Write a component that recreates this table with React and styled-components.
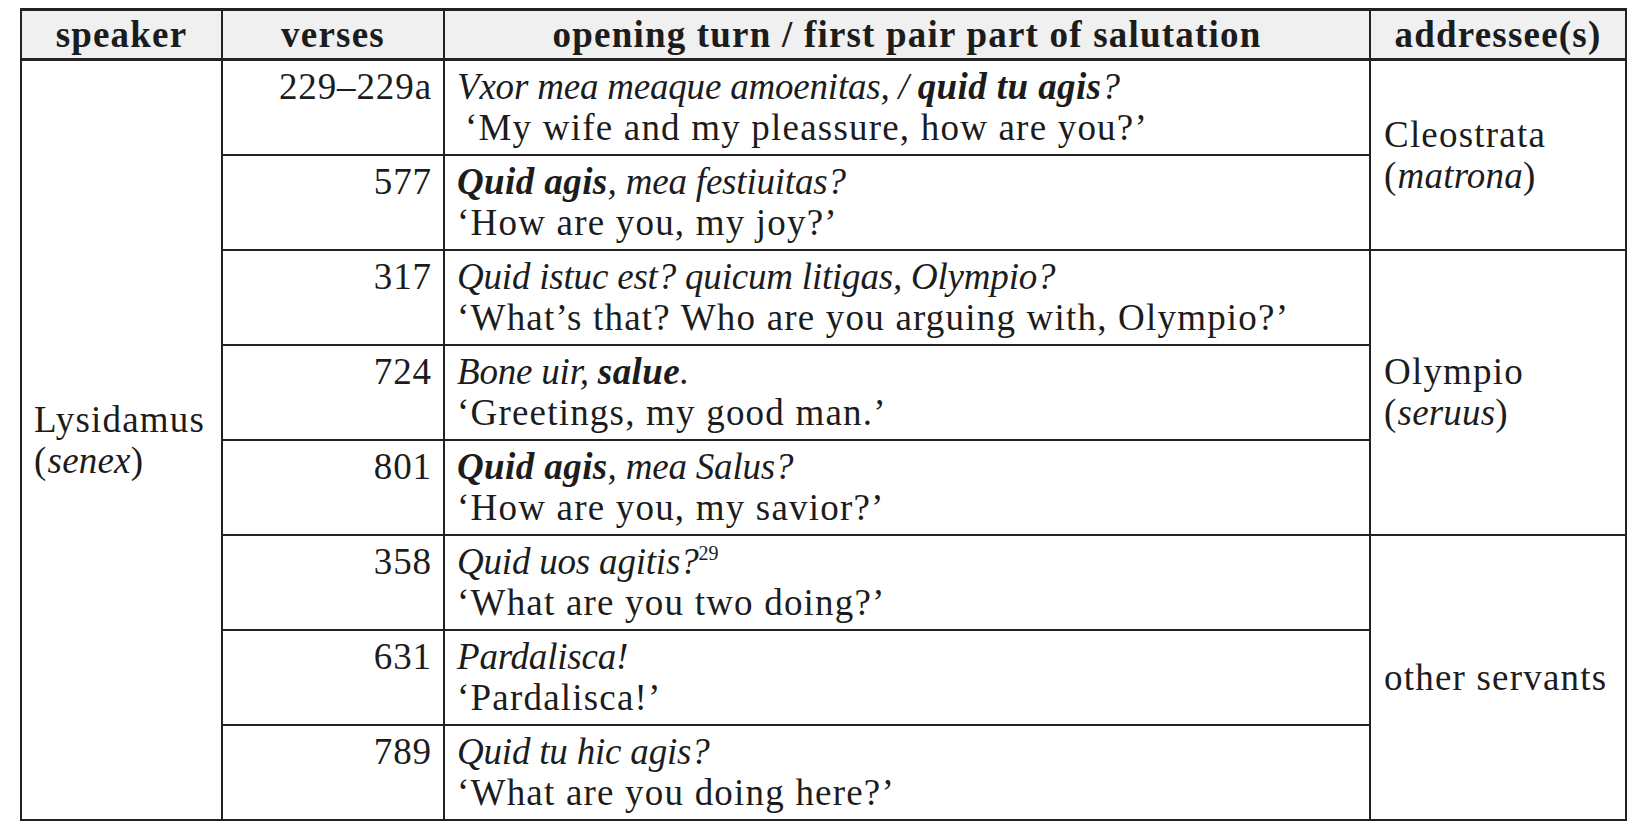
import React from "react";
import styled, { createGlobalStyle } from "styled-components";

const GlobalStyle = createGlobalStyle`
  body {
    margin: 0;
    background: #ffffff;
  }
`;

const Page = styled.div`
  padding: 8px 0 0 20px;
`;

const Table = styled.table`
  border-collapse: collapse;
  table-layout: fixed;
  width: 1605px;
  font-family: "Liberation Serif", "Times New Roman", serif;
  font-size: 37px;
  letter-spacing: 1.2px;
  color: #1c1c1c;
`;

const HeadRow = styled.tr`
  height: 50px;
`;

const HeadCell = styled.th`
  background: #f0f0f0;
  border: 2px solid #222;
  border-top-width: 3px;
  border-bottom-width: 3px;
  font-weight: bold;
  font-size: 37px;
  letter-spacing: 1.2px;
  text-align: center;
  padding: 0 6px;
  line-height: 40px;
  white-space: nowrap;
`;

const Row = styled.tr`
  height: 95px;
`;

const Cell = styled.td`
  border: 2px solid #222;
  line-height: 41px;
  vertical-align: top;
  padding: 5px 12px 5px 12px;
`;

const SpeakerCell = styled(Cell)`
  vertical-align: middle;
`;

const VerseCell = styled(Cell)`
  text-align: right;
  padding-right: 11px;
  letter-spacing: 0.9px;
`;

const TurnCell = styled(Cell)`
  padding-left: 12px;
  white-space: nowrap;
`;

const AddresseeCell = styled(Cell)`
  vertical-align: middle;
  padding-left: 13px;
`;

const Latin = styled.div`
  font-style: italic;
  letter-spacing: -0.2px;
`;

const Strong = styled.b`
  font-weight: bold;
  letter-spacing: 0.4px;
`;

const English = styled.div`
  padding-left: ${(p) => (p.indent ? "8px" : "0")};
`;

const Note = styled.sup`
  font-style: normal;
  font-size: 20px;
  line-height: 0;
  vertical-align: 14px;
  letter-spacing: 0;
`;

const Em = styled.i`
  font-style: italic;
  letter-spacing: 0.2px;
`;

const Line = styled.div``;

const rows = [
  {
    verse: "229–229a",
    latin: (
      <>
        Vxor mea meaque amoenitas, / <Strong>quid tu agis</Strong>?
      </>
    ),
    english: "‘My wife and my pleassure, how are you?’",
    indent: true,
  },
  {
    verse: "577",
    latin: (
      <>
        <Strong>Quid agis</Strong>, mea festiuitas?
      </>
    ),
    english: "‘How are you, my joy?’",
  },
  {
    verse: "317",
    latin: <>Quid istuc est? quicum litigas, Olympio?</>,
    english: "‘What’s that? Who are you arguing with, Olympio?’",
  },
  {
    verse: "724",
    latin: (
      <>
        Bone uir, <Strong>salue</Strong>.
      </>
    ),
    english: "‘Greetings, my good man.’",
  },
  {
    verse: "801",
    latin: (
      <>
        <Strong>Quid agis</Strong>, mea Salus?
      </>
    ),
    english: "‘How are you, my savior?’",
  },
  {
    verse: "358",
    latin: (
      <>
        Quid uos agitis?<Note>29</Note>
      </>
    ),
    english: "‘What are you two doing?’",
  },
  {
    verse: "631",
    latin: <>Pardalisca!</>,
    english: "‘Pardalisca!’",
  },
  {
    verse: "789",
    latin: <>Quid tu hic agis?</>,
    english: "‘What are you doing here?’",
  },
];

const addressees = {
  0: { span: 2, name: "Cleostrata", role: "matrona" },
  2: { span: 3, name: "Olympio", role: "seruus" },
  5: { span: 3, name: "other servants" },
};

export default function App() {
  return (
    <Page>
      <GlobalStyle />
      <Table>
        <colgroup>
          <col style={{ width: 201 }} />
          <col style={{ width: 222 }} />
          <col style={{ width: 926 }} />
          <col style={{ width: 256 }} />
        </colgroup>
        <thead>
          <HeadRow>
            <HeadCell>speaker</HeadCell>
            <HeadCell>verses</HeadCell>
            <HeadCell>opening turn / first pair part of salutation</HeadCell>
            <HeadCell>addressee(s)</HeadCell>
          </HeadRow>
        </thead>
        <tbody>
          {rows.map((row, i) => {
            const addr = addressees[i];
            return (
              <Row key={row.verse}>
                {i === 0 && (
                  <SpeakerCell rowSpan={rows.length}>
                    <Line>Lysidamus</Line>
                    <Line>
                      (<Em>senex</Em>)
                    </Line>
                  </SpeakerCell>
                )}
                <VerseCell>{row.verse}</VerseCell>
                <TurnCell>
                  <Latin>{row.latin}</Latin>
                  <English indent={row.indent}>{row.english}</English>
                </TurnCell>
                {addr && (
                  <AddresseeCell rowSpan={addr.span}>
                    <Line>{addr.name}</Line>
                    {addr.role && (
                      <Line>
                        (<Em>{addr.role}</Em>)
                      </Line>
                    )}
                  </AddresseeCell>
                )}
              </Row>
            );
          })}
        </tbody>
      </Table>
    </Page>
  );
}
